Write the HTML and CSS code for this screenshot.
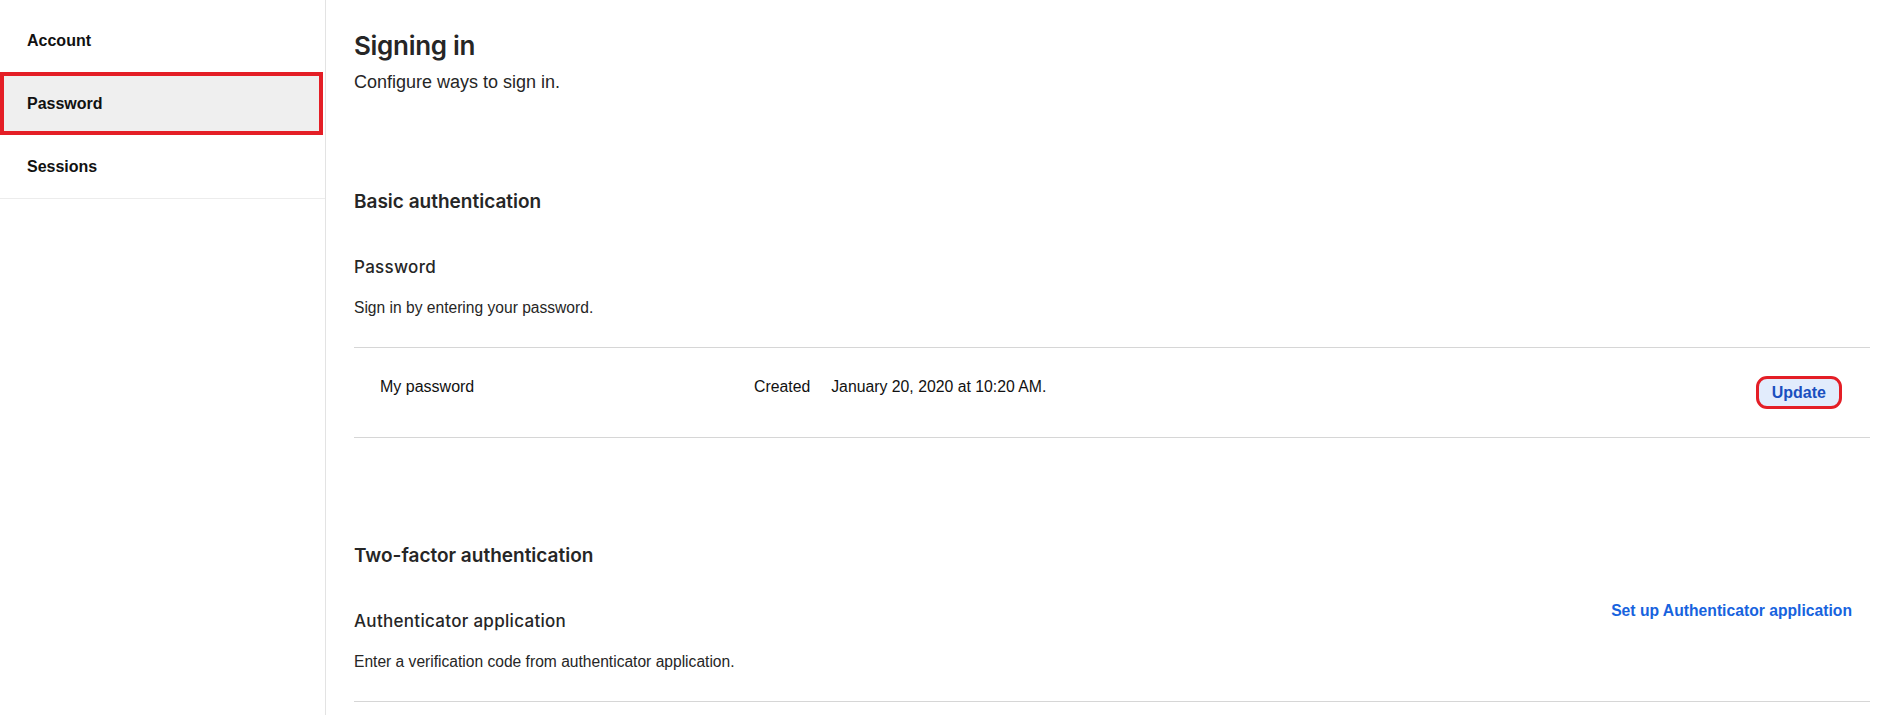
FILE: index.html
```html
<!DOCTYPE html>
<html lang="en">
<head>
    <meta charset="utf-8" />
    <meta name="viewport" content="width=device-width, initial-scale=1" />
    <title>Signing in</title>
    <link rel="stylesheet" href="styles.css">
</head>
<body>
    <div class="settings">
        <nav class="sidebar">
            <a class="nav-item" href="#">Account</a>
            <a class="nav-item active" href="#">Password</a>
            <a class="nav-item" href="#">Sessions</a>
        </nav>

        <main class="content">
            <h1>Signing in</h1>
            <p class="subtitle">Configure ways to sign in.</p>

            <section class="group basic">
                <h2>Basic authentication</h2>

                <div class="method-head">
                    <h3>Password</h3>
                </div>
                <p class="description">Sign in by entering your password.</p>

                <div class="credential-list">
                    <div class="credential">
                        <span class="credential-name">My password</span>
                        <span class="credential-meta">
                            <span class="meta-label">Created</span>
                            <span>January 20, 2020 at 10:20 AM.</span>
                        </span>
                        <button class="btn-update">Update</button>
                    </div>
                </div>
            </section>

            <section class="group two-factor">
                <h2>Two-factor authentication</h2>

                <div class="method-head">
                    <h3>Authenticator application</h3>
                    <a class="setup-link" href="#">Set up Authenticator application</a>
                </div>
                <p class="description">Enter a verification code from authenticator application.</p>

                <div class="credential-list"></div>
            </section>
        </main>
    </div>
</body>
</html>
```

FILE: styles.css
```css
* {
    margin: 0;
    padding: 0;
    box-sizing: border-box;
}

body {
    font-family: 'Liberation Sans', Arial, sans-serif;
    color: #222;
    background: #fff;
}

.settings {
    display: flex;
    min-height: 100vh;
}

/* left navigation */
.sidebar {
    width: 326px;
    flex-shrink: 0;
    border-right: 1px solid #e3e3e3;
    padding-top: 9px;
    display: flex;
    flex-direction: column;
}

.sidebar::after {
    content: '';
    border-top: 1px solid #ececec;
}

.nav-item {
    height: 63px;
    display: flex;
    align-items: center;
    padding-left: 27px;
    font-size: 16px;
    font-weight: 700;
    color: #111;
    text-decoration: none;
}

.nav-item.active {
    background: #efefef;
    border: 4px solid #e41e26;
    padding-left: 23px;
    margin-right: 2px;
}

/* main panel */
.content {
    flex: 1;
    padding: 30px 15px 0 28px;
}

h1,
h2,
h3 {
    font-family: Inter, 'Noto Sans', sans-serif;
    color: #262626;
}

h1 {
    font-size: 26px;
    font-weight: 600;
    line-height: 32px;
    letter-spacing: -0.3px;
}

.subtitle {
    margin-top: 9px;
    font-size: 18px;
    line-height: 22px;
    color: #262626;
}

h2 {
    font-size: 19px;
    font-weight: 600;
    line-height: 26px;
}

.group.basic {
    margin-top: 96px;
}

.group.two-factor {
    margin-top: 105px;
}

.method-head {
    margin-top: 32px;
    display: flex;
    justify-content: space-between;
    align-items: flex-start;
}

h3 {
    padding-top: 8px;
    font-size: 17px;
    font-weight: 500;
    line-height: 24px;
    letter-spacing: 0.3px;
}

.setup-link {
    margin-right: 18px;
    font-size: 15.7px;
    font-weight: 700;
    line-height: 20px;
    color: #1763de;
    text-decoration: none;
}

.description {
    margin-top: 19px;
    font-size: 15.6px;
    line-height: 20px;
    color: #262626;
}

.credential-list {
    margin-top: 29px;
    border-top: 1px solid #d6d6d6;
}

.credential {
    height: 90px;
    display: flex;
    align-items: center;
    padding: 0 28px 0 26px;
    border-bottom: 1px solid #d6d6d6;
    font-size: 16px;
    color: #111;
}

.credential-name,
.credential-meta {
    padding-bottom: 11px;
}

.credential-name {
    width: 374px;
}

.credential-meta {
    flex: 1;
    display: flex;
    gap: 21px;
    font-size: 15.8px;
}

.btn-update {
    height: 33px;
    padding: 0 13px;
    border: 3px solid #e41e26;
    border-radius: 11px;
    background: #e2ecfc;
    color: #1a4fbf;
    font-family: 'Liberation Sans', Arial, sans-serif;
    font-size: 16px;
    font-weight: 700;
    cursor: pointer;
}
```
